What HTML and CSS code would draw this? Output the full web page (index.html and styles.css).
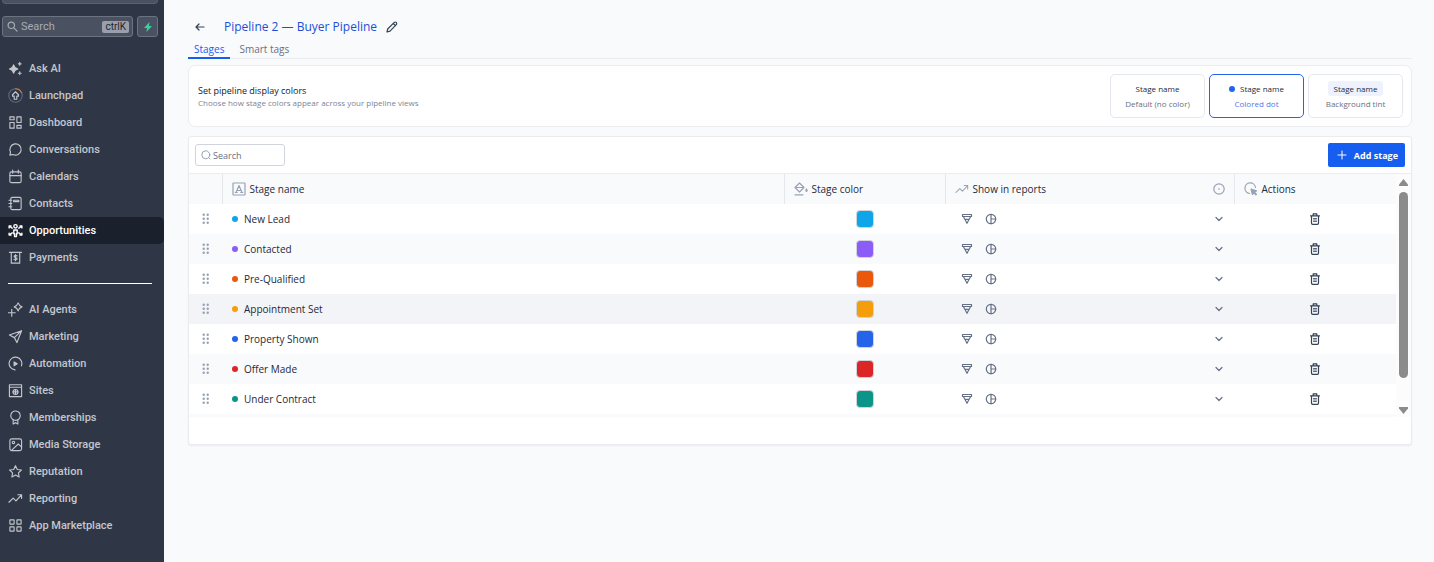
FILE: index.html
```html
<!DOCTYPE html>
<html lang="en">
<head>
  <meta charset="UTF-8">
  <meta name="viewport" content="width=device-width, initial-scale=1">
  <title>Pipeline 2 — Buyer Pipeline</title>
  <link rel="stylesheet" href="styles.css">
</head>
<body>

<!-- shared icons -->
<svg class="sprite" aria-hidden="true">
  <symbol id="i-grip" viewBox="0 0 8 12"><g fill="currentColor"><circle cx="1.7" cy="1.7" r="1.2"/><circle cx="5.7" cy="1.7" r="1.2"/><circle cx="1.7" cy="5.7" r="1.2"/><circle cx="5.7" cy="5.7" r="1.2"/><circle cx="1.7" cy="9.7" r="1.2"/><circle cx="5.7" cy="9.7" r="1.2"/></g></symbol>
  <symbol id="i-funnel" viewBox="0 0 12 12"><path d="M1.500 1.500h9v2h-9zM2.500 3.700l1.300 2.600h4.400l1.300-2.600M4 6.500l2 3.800 2-3.800"/></symbol>
  <symbol id="i-pie" viewBox="0 0 12 12"><circle cx="6" cy="6" r="4.700"/><path d="M6 1.300v9.400M6 6h4.700"/></symbol>
  <symbol id="i-down" viewBox="0 0 10 10"><path d="M2 3.500l3 3 3-3"/></symbol>
  <symbol id="i-trash" viewBox="0 0 12 12"><path d="M1.500 2.800h9M4.200 2.500V.9h3.600v1.600M2.500 3v7q0 1.400 1.200 1.400h4.600q1.200 0 1.200-1.400V3"/><path d="M4.500 5.500h3M4.500 7h3M4.500 8.500h3" stroke-width=".8"/></symbol>
  <symbol id="i-trend" viewBox="0 0 16 16"><path d="M1 12l4.500-4.500 3 3L14.500 4M10.500 4h4v4"/></symbol>
</svg>

<div class="app">
  <aside class="sidebar">
    <div class="account"></div>
    <div class="side-search">
      <label class="side-box">
        <svg width="11" height="11" viewBox="0 0 12 12"><circle cx="4.700" cy="4.700" r="3.500"/><path d="M7.500 7.500l3.500 3.500"/></svg>
        <input type="text" placeholder="Search" aria-label="Search">
        <kbd>ctrlK</kbd>
      </label>
      <button class="bolt" aria-label="Quick actions"><svg width="10" height="12" viewBox="0 0 10 12"><path d="M6.500 1L1 7h3L3.500 11 9 5H6z"/></svg></button>
    </div>

    <nav class="nav">
      <a href="#"><svg viewBox="0 0 16 16"><path class="solid" d="M6 4Q6.800 7.700 10.500 8.500 6.800 9.300 6 13 5.200 9.300 1.500 8.500 5.200 7.700 6 4z"/><path d="M12.500 1.500v3M11 3h3M12.500 11.500v3M11 13h3"/></svg>Ask AI</a>
      <a href="#"><svg viewBox="0 0 16 16"><circle class="ring" cx="8" cy="8" r="7.200"/><path class="arc" d="M8 .8a7.200 7.200 0 0 1 6.500 4.300"/><path d="M8 4L4.800 7.200v1.500h1.800V12h2.800V8.700h1.800V7.200z"/></svg>Launchpad</a>
      <a href="#"><svg viewBox="0 0 16 16"><path d="M2 2h4.500v3H2zM9.500 2H14v6H9.500zM2 8h4.500v6H2zM9.500 11H14v3H9.500z"/></svg>Dashboard</a>
      <a href="#"><svg viewBox="0 0 16 16"><path d="M2 14l.7-3.300A6 6 0 1 1 5.300 13.300z"/></svg>Conversations</a>
      <a href="#"><svg viewBox="0 0 16 16"><rect x="2" y="3" width="12" height="11.500" rx="1.500"/><path d="M2 7h12M5 1v3.500M11 1v3.500"/></svg>Calendars</a>
      <a href="#"><svg viewBox="0 0 16 16"><rect x="3" y="1.500" width="11" height="13" rx="1.500"/><path d="M6 4.500h5.500V6H6zM1 4.500h3M1 8h3M1 11.500h3"/></svg>Contacts</a>
      <a href="#" class="active"><svg viewBox="0 0 16 16"><circle cx="8" cy="3.500" r="1.800"/><path d="M6.200 7.500h3.600v4H9v3H7v-3h-.8zM1.500 3.500l3 2M11.500 5.500l3-2M1.500 12.500l3-2M11.500 10.500l3 2M1.200 5.200v-2h2M14.800 5.200v-2h-2M1.200 10.800v2h2M14.800 10.800v2h-2"/></svg>Opportunities</a>
      <a href="#"><svg viewBox="0 0 16 16"><path d="M1.500 2.500h13M3.500 2.500v11.500h9V2.500"/><path d="M9.700 6.300Q8 5.200 6.800 6.200 6.200 7.500 8 8q2.200.8 1.400 2-1.400 1-3 0M8 4.800v6.700"/></svg>Payments</a>
    </nav>
    <hr>
    <nav class="nav">
      <a href="#"><svg viewBox="0 0 16 16"><path d="M10.800 1Q11.800 4.200 15 5.200 11.800 6.200 10.800 9.500 9.800 6.200 6.600 5.200 9.800 4.200 10.800 1zM4 7.800v7.400M.3 11.500h7.400"/></svg>AI Agents</a>
      <a href="#"><svg viewBox="0 0 16 16"><path d="M14.500 1.800L1.500 6.500l5.300 2.700 2.700 5.300zM14.500 1.800L6.800 9.200"/></svg>Marketing</a>
      <a href="#"><svg viewBox="0 0 16 16"><path d="M7.500 14.800A6.800 6.800 0 1 1 14.300 10.500"/><path class="solid" d="M6.500 6.300v4L9.800 8.300z"/></svg>Automation</a>
      <a href="#"><svg viewBox="0 0 16 16"><path d="M1.500 1.800h13v12.700h-13zM1.500 4.500h13"/><circle cx="8" cy="9.500" r="2.600"/><path d="M8 6.900v5.200M5.400 9.500h5.200"/></svg>Sites</a>
      <a href="#"><svg viewBox="0 0 16 16"><circle cx="8" cy="6" r="5" stroke-dasharray="2.700 .6"/><path d="M5.500 10.500V15L8 13.500l2.500 1.500v-4.500"/></svg>Memberships</a>
      <a href="#"><svg viewBox="0 0 16 16"><rect x="2" y="2" width="12.500" height="12.500" rx="2"/><circle cx="5.800" cy="5.800" r="1.300"/><path d="M4 14l7-6.500 3.500 3.300"/></svg>Media Storage</a>
      <a href="#"><svg viewBox="0 0 16 16"><path d="M8 1.800l1.900 4 4.400.6-3.200 3.100.8 4.400L8 11.800l-3.900 2.100.8-4.400L1.700 6.400l4.400-.6z"/></svg>Reputation</a>
      <a href="#"><svg viewBox="0 0 16 16"><use href="#i-trend"/></svg>Reporting</a>
      <a href="#"><svg viewBox="0 0 16 16"><rect x="2" y="2" width="4.500" height="4.500" rx=".5"/><rect x="9.500" y="2" width="4.500" height="4.500" rx=".5"/><rect x="2" y="9.500" width="4.500" height="4.500" rx=".5"/><rect x="9.500" y="9.500" width="4.500" height="4.500" rx=".5"/></svg>App Marketplace</a>
    </nav>
  </aside>

  <main class="main">
    <header class="title-bar">
      <button class="icon-btn" aria-label="Back"><svg width="12" height="12" viewBox="0 0 12 12"><path d="M10 6H2M5 3L2 6l3 3"/></svg></button>
      <h1>Pipeline 2 — Buyer Pipeline</h1>
      <button class="icon-btn" aria-label="Rename pipeline"><svg width="12" height="12" viewBox="0 0 12 12"><path d="M1 11l.7-3L8.300 1.400q1.100-.8 1.900 0t.3 2L4 10.200zM7.300 2.500l2.200 2.200"/></svg></button>
    </header>

    <nav class="tabs">
      <a href="#" class="current">Stages</a>
      <a href="#">Smart tags</a>
    </nav>

    <section class="card display-card">
      <div>
        <h2>Set pipeline display colors</h2>
        <p>Choose how stage colors appear across your pipeline views</p>
      </div>
      <div class="options">
        <button class="option"><span class="sample">Stage name</span><span class="caption">Default (no color)</span></button>
        <button class="option selected"><span class="sample"><i class="dot blue"></i>Stage name</span><span class="caption">Colored dot</span></button>
        <button class="option"><span class="sample tint">Stage name</span><span class="caption">Background tint</span></button>
      </div>
    </section>

    <section class="card stages-card">
      <div class="toolbar">
        <label class="search">
          <svg width="10" height="10" viewBox="0 0 10 10"><circle cx="4.800" cy="4.800" r="4"/><path d="M7.500 7.500L9 9"/></svg>
          <input type="text" placeholder="Search" aria-label="Search stages">
        </label>
        <button class="add"><svg width="10" height="10" viewBox="0 0 10 10"><path d="M5 1v8M1 5h8"/></svg>Add stage</button>
      </div>

      <div class="table-wrap">
        <table>
          <colgroup><col class="c-grip"><col><col class="c-color"><col class="c-reports"><col class="c-actions"></colgroup>
          <thead>
            <tr>
              <th></th>
              <th><div class="head"><svg viewBox="0 0 14 14"><rect x="1" y="1" width="12" height="12" rx=".5"/><path d="M4 10.500L7 3.500l3 7M5 8.500h4M3.300 10.500h2M8.700 10.500h2"/></svg>Stage name</div></th>
              <th><div class="head"><svg viewBox="0 0 14 14"><path d="M5.500 1L1 5.500 5.500 10 10 5.500zM1 5.500h9M1 12.800h8"/><path d="M12.500 7q-1.300 1.800 0 2.500 1.300-.7 0-2.500z"/></svg>Stage color</div></th>
              <th><div class="head"><svg viewBox="0 0 16 16"><use href="#i-trend"/></svg>Show in reports<svg class="info" viewBox="0 0 12 12"><circle cx="6" cy="6" r="5.200"/><path d="M6 5.700v.6"/></svg></div></th>
              <th><div class="head"><svg viewBox="0 0 14 14"><path d="M5.500 11.500A5.300 5.300 0 1 1 11.500 5.500"/><path class="solid" d="M7 7l5.500 1.900-2.300 1 2.300 2.400-.6.600L9.500 10.500l-1 2z"/></svg>Actions</div></th>
            </tr>
          </thead>
          <tbody>
            <tr>
              <td><svg class="grip"><use href="#i-grip"/></svg></td>
              <td><span class="stage"><i class="dot sky"></i>New Lead</span></td>
              <td><button class="swatch sky" aria-label="Stage color"></button></td>
              <td><div class="reports"><svg><use href="#i-funnel"/></svg><svg><use href="#i-pie"/></svg><svg class="chev"><use href="#i-down"/></svg></div></td>
              <td><button class="trash" aria-label="Delete"><svg><use href="#i-trash"/></svg></button></td>
            </tr>
            <tr>
              <td><svg class="grip"><use href="#i-grip"/></svg></td>
              <td><span class="stage"><i class="dot violet"></i>Contacted</span></td>
              <td><button class="swatch violet" aria-label="Stage color"></button></td>
              <td><div class="reports"><svg><use href="#i-funnel"/></svg><svg><use href="#i-pie"/></svg><svg class="chev"><use href="#i-down"/></svg></div></td>
              <td><button class="trash" aria-label="Delete"><svg><use href="#i-trash"/></svg></button></td>
            </tr>
            <tr>
              <td><svg class="grip"><use href="#i-grip"/></svg></td>
              <td><span class="stage"><i class="dot orange"></i>Pre-Qualified</span></td>
              <td><button class="swatch orange" aria-label="Stage color"></button></td>
              <td><div class="reports"><svg><use href="#i-funnel"/></svg><svg><use href="#i-pie"/></svg><svg class="chev"><use href="#i-down"/></svg></div></td>
              <td><button class="trash" aria-label="Delete"><svg><use href="#i-trash"/></svg></button></td>
            </tr>
            <tr class="hovered">
              <td><svg class="grip"><use href="#i-grip"/></svg></td>
              <td><span class="stage"><i class="dot amber"></i>Appointment Set</span></td>
              <td><button class="swatch amber" aria-label="Stage color"></button></td>
              <td><div class="reports"><svg><use href="#i-funnel"/></svg><svg><use href="#i-pie"/></svg><svg class="chev"><use href="#i-down"/></svg></div></td>
              <td><button class="trash" aria-label="Delete"><svg><use href="#i-trash"/></svg></button></td>
            </tr>
            <tr>
              <td><svg class="grip"><use href="#i-grip"/></svg></td>
              <td><span class="stage"><i class="dot blue"></i>Property Shown</span></td>
              <td><button class="swatch blue" aria-label="Stage color"></button></td>
              <td><div class="reports"><svg><use href="#i-funnel"/></svg><svg><use href="#i-pie"/></svg><svg class="chev"><use href="#i-down"/></svg></div></td>
              <td><button class="trash" aria-label="Delete"><svg><use href="#i-trash"/></svg></button></td>
            </tr>
            <tr>
              <td><svg class="grip"><use href="#i-grip"/></svg></td>
              <td><span class="stage"><i class="dot red"></i>Offer Made</span></td>
              <td><button class="swatch red" aria-label="Stage color"></button></td>
              <td><div class="reports"><svg><use href="#i-funnel"/></svg><svg><use href="#i-pie"/></svg><svg class="chev"><use href="#i-down"/></svg></div></td>
              <td><button class="trash" aria-label="Delete"><svg><use href="#i-trash"/></svg></button></td>
            </tr>
            <tr>
              <td><svg class="grip"><use href="#i-grip"/></svg></td>
              <td><span class="stage"><i class="dot teal"></i>Under Contract</span></td>
              <td><button class="swatch teal" aria-label="Stage color"></button></td>
              <td><div class="reports"><svg><use href="#i-funnel"/></svg><svg><use href="#i-pie"/></svg><svg class="chev"><use href="#i-down"/></svg></div></td>
              <td><button class="trash" aria-label="Delete"><svg><use href="#i-trash"/></svg></button></td>
            </tr>
          </tbody>
        </table>
        <div class="scrollbar" aria-hidden="true">
          <svg width="9" height="8" viewBox="0 0 9 8"><path d="M4.500 0L9 5.500V7H0V5.500z"/></svg>
          <span class="thumb"></span>
          <svg width="9" height="8" viewBox="0 0 9 8"><path d="M4.500 8L9 2.500V1H0v1.500z"/></svg>
        </div>
      </div>
    </section>
  </main>
</div>

</body>
</html>
```
FILE: styles.css
```css
* {
  box-sizing: border-box;
}
body {
  margin: 0;
  background: #f9fafc;
  color: #1f2937;
  font-family: "Open Sans", "Noto Sans", sans-serif;
  font-size: 10px;
}
button, input {
  font: inherit;
  color: inherit;
}
button {
  padding: 0;
  border: 0;
  background: none;
  cursor: pointer;
}
a {
  color: inherit;
  text-decoration: none;
}
svg {
  flex: none;
  fill: none;
  stroke: currentColor;
  stroke-linecap: round;
  stroke-linejoin: round;
}
.sprite {
  position: absolute;
  width: 0;
  height: 0;
}
.solid {
  fill: currentColor;
}
.app {
  display: flex;
  min-height: 100vh;
}

/* sidebar */
.sidebar {
  width: 164px;
  flex: none;
  background: #2f3747;
  color: #c3c7cd;
  font-family: Roboto, sans-serif;
  font-size: 11px;
}
.account {
  height: 4px;
  margin: 0 6px 12px 2px;
  background: #4a5261;
  border: 1px solid #596170;
  border-top: 0;
  border-radius: 0 0 5px 5px;
}
.side-search {
  display: flex;
  gap: 4px;
  margin: 0 6px 18px 2px;
}
.side-box {
  display: flex;
  align-items: center;
  flex: 1;
  min-width: 0;
  gap: 3px;
  height: 21px;
  padding: 0 3px 0 4px;
  background: #4a5261;
  border: 1px solid #6b7280;
  border-radius: 3px;
}
.side-box svg {
  color: #a7acb5;
  stroke-width: 1.3;
}
.side-box input {
  flex: 1;
  min-width: 0;
  width: 0;
  padding: 0;
  border: 0;
  outline: 0;
  background: none;
}
.side-box input::placeholder {
  color: #a7acb5;
}
kbd {
  padding: 0 3px;
  background: #9aa0ab;
  border-radius: 2px;
  color: #1f2533;
  font: 10px/12px Roboto, sans-serif;
}
.bolt {
  display: grid;
  place-items: center;
  width: 21px;
  height: 21px;
  background: #4a5261;
  border: 1px solid #6b7280;
  border-radius: 3px;
}
.bolt svg {
  fill: #34d399;
  stroke: none;
}
.nav a {
  display: flex;
  align-items: center;
  gap: 6px;
  height: 27px;
  padding-left: 8px;
  font-weight: 500;
}
.nav svg {
  width: 15px;
  height: 15px;
  stroke-width: 1.2;
}
.nav .ring {
  stroke: #5c6880;
}
.nav .arc {
  stroke: #d9772b;
}
.nav .active {
  background: #1b212c;
  border-radius: 0 5px 5px 0;
  color: #fff;
}
.nav .active svg {
  stroke-width: 1.5;
}
.sidebar hr {
  height: 1px;
  margin: 12px;
  margin-left: 8px;
  border: 0;
  background: #fff;
}

/* page header */
.main {
  flex: 1;
  min-width: 0;
  padding: 16px 22px 0 24px;
}
.title-bar {
  display: flex;
  align-items: center;
  height: 21px;
  padding-left: 6px;
}
.title-bar h1 {
  margin: 0 9px 0 18px;
  color: #1d4ed8;
  font-size: 12px;
  font-weight: 500;
}
.icon-btn {
  display: flex;
  color: #344054;
}
.icon-btn svg {
  stroke-width: 1.2;
}
.tabs {
  display: flex;
  gap: 3px;
  height: 22px;
  margin-bottom: 6px;
  border-bottom: 1px solid #eaecf0;
  color: #667085;
}
.tabs a {
  height: 22px;
  padding: 0 6px;
  line-height: 24px;
}
.tabs .current {
  border-bottom: 2px solid #155eef;
  color: #155eef;
  font-weight: 500;
}

/* cards */
.card {
  background: #fff;
  border: 1px solid #eaecf0;
}
.display-card {
  display: flex;
  align-items: center;
  justify-content: space-between;
  height: 62px;
  margin-bottom: 9px;
  padding: 0 8px 0 9px;
  border-radius: 7px;
}
.display-card h2 {
  margin: 0;
  color: #101828;
  font-size: 9px;
  font-weight: 500;
  line-height: 13px;
}
.display-card p {
  margin: 0;
  color: #7c8494;
  font-size: 8px;
  line-height: 12px;
}
.options {
  display: flex;
  gap: 4px;
}
.option {
  display: flex;
  flex-direction: column;
  align-items: center;
  justify-content: center;
  width: 95px;
  height: 44px;
  border: 1px solid #e4e7ec;
  border-radius: 5px;
  font-size: 8px;
}
.option.selected {
  border-color: #2563eb;
}
.sample {
  display: flex;
  align-items: center;
  gap: 5px;
  padding: 0 6px;
  border-radius: 3px;
  font-weight: 500;
  line-height: 15px;
}
.sample.tint {
  background: #eef2fe;
}
.caption {
  color: #667085;
  line-height: 15px;
}
.selected .caption {
  color: #4f78ee;
}
.dot {
  flex: none;
  width: 6px;
  height: 6px;
  border-radius: 50%;
}
.sky { background: #0ea5e9; }
.violet { background: #8b5cf6; }
.orange { background: #ea580c; }
.amber { background: #f59e0b; }
.blue { background: #2563eb; }
.red { background: #dc2626; }
.teal { background: #0d9488; }

/* stages table */
.stages-card {
  padding-bottom: 27px;
  border-radius: 3px;
  box-shadow: 0 1px 2px rgba(16, 24, 40, 0.06);
}
.toolbar {
  display: flex;
  align-items: center;
  justify-content: space-between;
  height: 37px;
  padding: 0 6px;
  border-bottom: 1px solid #eaecf0;
}
.search {
  display: flex;
  align-items: center;
  gap: 2px;
  width: 90px;
  height: 22px;
  padding: 0 5px;
  border: 1px solid #d0d5dd;
  border-radius: 3px;
  color: #98a2b3;
}
.search input {
  flex: 1;
  min-width: 0;
  padding: 0;
  border: 0;
  outline: 0;
  background: none;
  color: #344054;
  font-size: 9px;
}
.search input::placeholder {
  color: #667085;
}
.add {
  display: flex;
  align-items: center;
  gap: 7px;
  height: 24px;
  padding: 0 7px 0 9px;
  background: #155eef;
  border-radius: 2px;
  color: #fff;
  font-size: 9px;
  font-weight: 700;
}
.table-wrap {
  display: flex;
  background: #f9fafc;
}
table {
  flex: 1;
  width: 0;
  margin-bottom: 3px;
  table-layout: fixed;
  border-collapse: collapse;
}
.c-grip { width: 33px; }
.c-color { width: 161px; }
.c-reports { width: 289px; }
.c-actions { width: 162px; }
th, td {
  height: 30px;
  padding: 0;
  text-align: left;
}
th {
  padding: 0 9px;
  border-left: 1px solid #e4e7ec;
  font-weight: 500;
}
th:first-child {
  border-left: 0;
}
.head {
  display: flex;
  align-items: center;
  gap: 4px;
}
.head svg {
  width: 14px;
  height: 14px;
  color: #98a2b3;
  stroke-width: 1.2;
}
.head .info {
  width: 12px;
  height: 12px;
  margin-left: auto;
}
tbody tr {
  background: #fff;
}
tbody tr:nth-child(even) {
  background: #f9fafc;
}
tbody tr.hovered {
  background: #f2f4f8;
}
.grip {
  display: block;
  width: 8px;
  height: 12px;
  margin-left: 13px;
  color: #98a2b3;
  stroke: none;
}
.stage {
  display: flex;
  align-items: center;
  gap: 6px;
  padding-left: 10px;
}
.swatch {
  display: block;
  width: 18px;
  height: 18px;
  margin: 0 auto;
  border: 1px solid #d0d5dd;
  border-radius: 4px;
}
.reports {
  display: flex;
  align-items: center;
  gap: 12px;
  padding: 0 10px 0 16px;
  color: #667085;
}
.reports svg {
  width: 12px;
  height: 12px;
  stroke-width: 1.2;
}
.reports .chev {
  width: 10px;
  height: 10px;
  margin-left: auto;
}
.trash {
  display: block;
  margin: 0 auto;
  color: #344054;
}
.trash svg {
  display: block;
  width: 12px;
  height: 12px;
  stroke-width: 1.2;
}
.scrollbar {
  display: flex;
  flex-direction: column;
  align-items: center;
  gap: 5px;
  width: 15px;
  padding: 5px 0 3px;
  background: #fcfcfc;
}
.scrollbar svg {
  fill: #8b8b8b;
  stroke: none;
}
.thumb {
  width: 9px;
  height: 186px;
  margin-bottom: auto;
  border-radius: 5px;
  background: #8b8b8b;
}
```
